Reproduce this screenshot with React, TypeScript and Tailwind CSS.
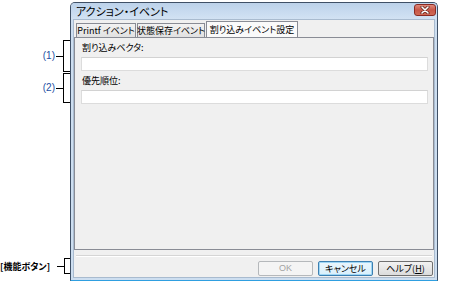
import React from 'react';

// Japanese UI text: Noto CJK with proportional kana, like the dialog's UI font
const JP = "font-['Noto_Sans_CJK_JP',sans-serif] [font-feature-settings:'palt']";

const Callout: React.FC<{ label: string; className: string; labelClass?: string }> = ({ label, className, labelClass }) => (
  <div className={`flex items-center justify-end ${className}`}>
    <span className={labelClass ?? "font-['Liberation_Sans',sans-serif] text-[10px] leading-none text-[#1d4fa3]"}>{label}</span>
    <span className="ml-[1px] w-[7px] h-px bg-black" />
    <span className="w-[7px] self-stretch border-y border-l border-black" />
  </div>
);

const Tab: React.FC<{ label: string; width: string; selected?: boolean }> = ({ label, width, selected }) =>
  selected ? (
    <div className={`${width} h-[16px] -mb-px relative z-10 flex items-center justify-center whitespace-nowrap border border-b-0 border-[#898c95] bg-[#fafafa] text-[9px] leading-none text-black`}>
      {label}
    </div>
  ) : (
    <div className={`${width} h-[14px] self-end flex items-center justify-center whitespace-nowrap border border-b-0 border-[#898c95] bg-gradient-to-b from-[#f2f2f2] to-[#e1e1e1] text-[9px] leading-none text-black`}>
      {label}
    </div>
  );

const Field: React.FC<{ label: string }> = ({ label }) => (
  <div className="pt-[3px]">
    <div className="pl-[1px] h-[13px] flex items-center whitespace-nowrap text-[9px] leading-none text-black">{label}</div>
    <div className="mt-[3px] h-[14px] bg-white border border-[#dcdcdc] border-t-[#d2d2d2]" />
  </div>
);

export default function App() {
  return (
    <div className={`w-[474px] h-[285px] bg-white flex ${JP}`}>
      {/* callouts on the left */}
      <div className="w-[70px] flex flex-col">
        <Callout label="(1)" className="mt-[40px] h-[32px]" />
        <Callout label="(2)" className="mt-[1px] h-[30px]" />
        <Callout
          label="[機能ボタン]"
          className="mt-[155px] h-[16px]"
          labelClass="whitespace-nowrap text-[9px] leading-none font-bold text-black mr-[6px]"
        />
      </div>

      {/* dialog window */}
      <div className="mt-[2px] w-[368px] h-[279px] flex flex-col border border-[#3f5066] rounded-t-[5px] bg-[#cddef0] border-b-[#2f9fe0]">
        <div className="h-[16px] flex items-start bg-gradient-to-b from-[#bcd2ea] to-[#d2e2f3] rounded-t-[4px]">
          <span className="pl-[5px] pt-[3px] whitespace-nowrap text-[11px] leading-none text-black">アクション・イベント</span>
          <div className="ml-auto mr-[1px] mt-[1px] w-[22px] h-[12px] flex items-center justify-center rounded-[3px] border border-[#8a2a22] bg-gradient-to-b from-[#e08a7c] via-[#c75647] to-[#d06a55]">
            <svg width="10" height="8" viewBox="0 0 10 8">
              <path d="M2 1 L8 7 M8 1 L2 7" stroke="#5a1f18" strokeWidth="3" strokeLinecap="round" />
              <path d="M2 1 L8 7 M8 1 L2 7" stroke="#ffffff" strokeWidth="1.6" strokeLinecap="round" />
            </svg>
          </div>
        </div>

        <div className="mx-[2px] mb-[2px] flex-1 flex flex-col bg-[#f0f0f0] border border-[#a9bbcf]">
          {/* tab strip */}
          <div className="mt-[1px] ml-[2px] h-[16px] flex gap-[1px]">
            <Tab label="Printf イベント" width="w-[60px]" />
            <Tab label="状態保存イベント" width="w-[68px]" />
            <Tab label="割り込みイベント設定" width="w-[92px]" selected />
          </div>

          {/* tab panel */}
          <div className="h-[213px] border border-[#898c95] bg-[#f0f0f0] pl-[6px] pr-[5px]">
            <Field label="割り込みベクタ:" />
            <Field label="優先順位:" />
          </div>

          {/* separator */}
          <div className="mt-[5px] mx-[2px] h-[2px] border-t border-[#d5d5d5] border-b border-b-white" />

          {/* function buttons */}
          <div className="mt-[4px] mr-[1px] flex justify-end gap-[5px]">
            <button className="w-[55px] h-[15px] flex items-center justify-center rounded-[2px] border border-[#b5b8bb] bg-[#f4f4f4] text-[9px] leading-none text-[#a3a3a3] font-['Liberation_Sans',sans-serif]">
              OK
            </button>
            <button className="w-[55px] h-[15px] flex items-center justify-center whitespace-nowrap rounded-[2px] border border-[#3c7fb1] bg-gradient-to-b from-[#eaf6fd] to-[#d9f0fc] text-[9px] leading-none text-black shadow-[inset_0_0_0_1px_#9ed6f5]">
              キャンセル
            </button>
            <button className="w-[55px] h-[15px] flex items-center justify-center whitespace-nowrap rounded-[2px] border border-[#707070] bg-gradient-to-b from-[#f2f2f2] to-[#dcdcdc] text-[9px] leading-none text-black">
              ヘルプ(<span className="underline">H</span>)
            </button>
          </div>
        </div>
      </div>
    </div>
  );
}
